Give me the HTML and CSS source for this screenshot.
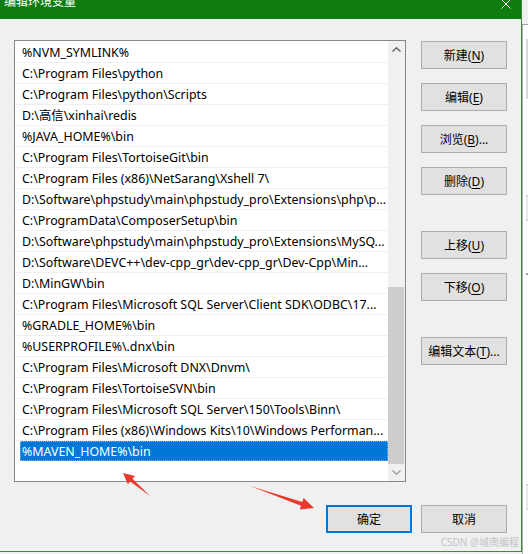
FILE: index.html
```html
<!DOCTYPE html>
<html lang="zh-CN">
<head>
    <meta charset="UTF-8">
    <title>编辑环境变量</title>
    <link rel="stylesheet" href="styles.css">
</head>
<body>
    <div class="screen">
        <div class="dialog">
            <div class="titlebar">
                <span class="title">编辑环境变量</span>
                <svg class="close" width="10" height="10" viewBox="0 0 10 10">
                    <path d="M0.5 0.5 L9.5 9.5 M9.5 0.5 L0.5 9.5" stroke="#fff" stroke-width="1"/>
                </svg>
            </div>

            <div class="content">
                <div class="main">
                    <div class="listbox">
                        <ul class="paths">
                            <li>%NVM_SYMLINK%</li>
                            <li>C:\Program Files\python</li>
                            <li>C:\Program Files\python\Scripts</li>
                            <li>D:\高信\xinhai\redis</li>
                            <li>%JAVA_HOME%\bin</li>
                            <li>C:\Program Files\TortoiseGit\bin</li>
                            <li>C:\Program Files (x86)\NetSarang\Xshell 7\</li>
                            <li>D:\Software\phpstudy\main\phpstudy_pro\Extensions\php\p...</li>
                            <li>C:\ProgramData\ComposerSetup\bin</li>
                            <li>D:\Software\phpstudy\main\phpstudy_pro\Extensions\MySQ...</li>
                            <li>D:\Software\DEVC++\dev-cpp_gr\dev-cpp_gr\Dev-Cpp\Min...</li>
                            <li>D:\MinGW\bin</li>
                            <li>C:\Program Files\Microsoft SQL Server\Client SDK\ODBC\17...</li>
                            <li>%GRADLE_HOME%\bin</li>
                            <li>%USERPROFILE%\.dnx\bin</li>
                            <li>C:\Program Files\Microsoft DNX\Dnvm\</li>
                            <li>C:\Program Files\TortoiseSVN\bin</li>
                            <li>C:\Program Files\Microsoft SQL Server\150\Tools\Binn\</li>
                            <li>C:\Program Files (x86)\Windows Kits\10\Windows Performan...</li>
                            <li class="selected"><span>%MAVEN_HOME%\bin</span></li>
                        </ul>
                        <div class="scrollbar">
                            <div class="arrow">
                                <svg width="9" height="5" viewBox="0 0 9 5"><path d="M0.5 4.5 L4.5 0.8 L8.5 4.5" fill="none" stroke="#606060" stroke-width="1.4"/></svg>
                            </div>
                            <div class="track"><div class="thumb"></div></div>
                            <div class="arrow">
                                <svg width="9" height="5" viewBox="0 0 9 5"><path d="M0.5 0.5 L4.5 4.2 L8.5 0.5" fill="none" stroke="#a0a0a0" stroke-width="1.4"/></svg>
                            </div>
                        </div>
                    </div>

                    <div class="side">
                        <button class="btn">新建(<u>N</u>)</button>
                        <button class="btn">编辑(<u>E</u>)</button>
                        <button class="btn">浏览(<u>B</u>)...</button>
                        <button class="btn">删除(<u>D</u>)</button>
                        <button class="btn group">上移(<u>U</u>)</button>
                        <button class="btn">下移(<u>O</u>)</button>
                        <button class="btn group">编辑文本(<u>T</u>)...</button>
                    </div>
                </div>

                <div class="footer">
                    <button class="btn default">确定</button>
                    <button class="btn">取消</button>
                </div>
                <div class="watermark">CSDN @城南编程</div>
            </div>

            <!-- red hint arrows drawn over the dialog -->
            <svg class="hints" width="522" height="552" viewBox="0 0 522 552">
                <polygon points="150,496 132.6,478.7 135,475.9 123,473 127.8,484.3 130.2,481.5" fill="#e8392c"/>
                <polygon points="250,486 301,505.7 299.8,509.5 314,508 303.6,498.1 302.3,501.9" fill="#e8392c"/>
            </svg>
        </div>

        <div class="backdrop">
            <div class="bd-top"></div>
            <div class="bd-pane">
                <div class="bd-bar"></div>
                <div class="bd-block"></div>
                <div class="bd-rows"></div>
            </div>
            <div class="bd-pane low">
                <div class="bd-block"></div>
            </div>
        </div>
    </div>
</body>
</html>
```

FILE: styles.css
```css
* {
    margin: 0;
    padding: 0;
    box-sizing: border-box;
}

body {
    background: #f0f0f0;
    font-family: "Noto Sans", "Noto Sans CJK SC", sans-serif;
    font-size: 12px;
    color: #000;
    overflow: hidden;
}

.screen {
    display: flex;
    width: 528px;
    height: 554px;
}

.dialog {
    position: relative;
    width: 522px;
    height: 552px;
    background: #f0f0f0;
    border-right: 1px solid #3d8a3d;
    border-bottom: 1px solid #3d8a3d;
    flex-shrink: 0;
}

.titlebar {
    display: flex;
    align-items: flex-start;
    justify-content: space-between;
    height: 19px;
    background: #107c10;
    color: #fff;
    overflow: hidden;
}

.title {
    margin: -6px 0 0 4px;
    line-height: 16px;
    font-size: 12px;
}

.close {
    margin: -1px 10px 0 0;
}

.content {
    padding: 21px 0 0 14px;
}

.main {
    display: flex;
    align-items: flex-start;
}

/* path list */
.listbox {
    display: flex;
    width: 392px;
    height: 442px;
    border: 1px solid #828790;
    background: #fff;
}

.paths {
    list-style: none;
    width: 373px;
    padding-top: 1px;
    font-size: 12.4px;
}

.paths li {
    height: 21px;
    line-height: 22px;
    padding-left: 7px;
    border-bottom: 1px solid #f0f0f0;
    white-space: nowrap;
    overflow: hidden;
}

.paths li.selected {
    padding-left: 5px;
    border-bottom-color: #fff;
}

.paths li.selected span {
    display: block;
    height: 20px;
    line-height: 21px;
    padding-left: 2px;
    background: #0078d7;
    color: #fff;
    outline: 1px dotted #7fb8e8;
    outline-offset: -1px;
}

.scrollbar {
    display: flex;
    flex-direction: column;
    width: 17px;
    background: #f0f0f0;
}

.arrow {
    display: flex;
    align-items: center;
    justify-content: center;
    height: 17px;
}

.track {
    flex: 1;
    display: flex;
    flex-direction: column;
    justify-content: flex-end;
    padding: 0 1px 0 0;
}

.thumb {
    height: 177px;
    background: #cdcdcd;
}

/* buttons */
.side {
    display: flex;
    flex-direction: column;
    gap: 14px;
    margin: 1px 0 0 15px;
}

.side .group {
    margin-top: 22px;
}

.btn {
    width: 86px;
    height: 28px;
    background: #e1e1e1;
    border: 1px solid #adadad;
    font-family: "Noto Sans", "Noto Sans CJK SC", sans-serif;
    font-size: 12px;
    color: #000;
}

.btn u {
    text-decoration-thickness: 1px;
    text-underline-offset: 2px;
}

.btn.default {
    border: 2px solid #0078d7;
}

.footer {
    display: flex;
    justify-content: flex-end;
    gap: 9px;
    margin: 23px 14px 0 0;
}

.watermark {
    margin: 3px 2px 0 0;
    text-align: right;
    font-size: 10px;
    line-height: 12px;
    color: #c4c4c4;
}

.hints {
    position: absolute;
    top: 0;
    left: 0;
    pointer-events: none;
}

/* window behind the dialog */
.backdrop {
    flex: 1;
    display: flex;
    flex-direction: column;
}

.bd-top {
    height: 25px;
    border-bottom: 1px solid #a0a0a0;
}

.bd-pane {
    flex: 1;
    background: #fff;
    border-left: 1px solid #b0b0b0;
    padding: 14px 0 0 3px;
}

.bd-bar {
    height: 60px;
    background: #d8d8d8;
}

.bd-block {
    height: 26px;
    margin-top: 96px;
    background: #e8e8e8;
    border-top: 1px solid #c8c8c8;
    border-bottom: 1px solid #c8c8c8;
}

.bd-rows {
    height: 54px;
    border-bottom: 2px solid #a0a0a0;
}

.bd-pane.low {
    flex: none;
    height: 260px;
    padding-top: 190px;
}

.bd-pane.low .bd-block {
    margin-top: 0;
}
```
